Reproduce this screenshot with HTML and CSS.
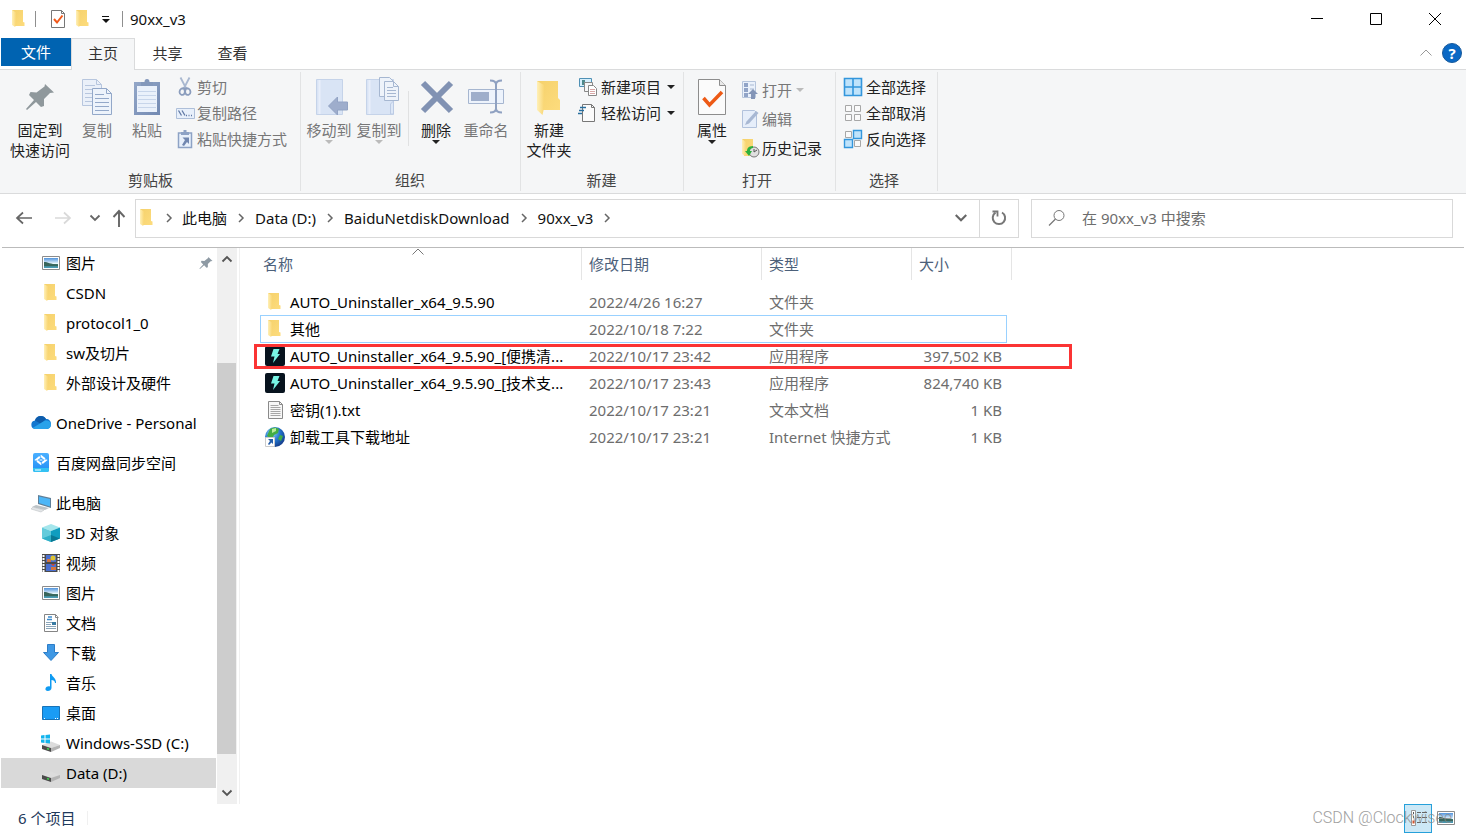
FILE: index.html
```html
<!DOCTYPE html>
<html lang="zh-CN">
<head>
<meta charset="utf-8">
<title>90xx_v3</title>
<link rel="stylesheet" href="styles.css">
</head>
<body>
<svg class="defs" aria-hidden="true">
  <defs>
    <linearGradient id="gFold" x1="0" x2="1"><stop offset="0" stop-color="#fff0b8"/><stop offset="1" stop-color="#f9d673"/></linearGradient>
    <linearGradient id="gBack" x1="0" x2="1" y2="1"><stop offset="0" stop-color="#f5d16c"/><stop offset="1" stop-color="#fddc7d"/></linearGradient>
    <linearGradient id="gSky" x2="0" y2="1"><stop offset="0" stop-color="#4f93dc"/><stop offset=".55" stop-color="#e8f5fc"/><stop offset=".6" stop-color="#3c6f62"/><stop offset="1" stop-color="#4ba0c0"/></linearGradient>
    <linearGradient id="gClip" x2="1" y2="1"><stop offset="0" stop-color="#93a7c8"/><stop offset="1" stop-color="#7289b2"/></linearGradient>
    <radialGradient id="gGlobe" cx=".35" cy=".3" r=".8"><stop offset="0" stop-color="#8fd8f5"/><stop offset=".5" stop-color="#2475cd"/><stop offset="1" stop-color="#12327e"/></radialGradient>
    <linearGradient id="gBaidu" x2="0" y2="1"><stop offset="0" stop-color="#4bb0ff"/><stop offset="1" stop-color="#1f8df5"/></linearGradient>
  </defs>
  <symbol id="folder" viewBox="0 0 20 20"><path d="M3 1h11v12l1.500.5V17H5z" fill="url(#gBack)"/><path d="M3 1l4 2.500V14l-.8 4L3 16z" fill="url(#gFold)"/></symbol>
  <symbol id="bigfolder" viewBox="0 0 40 40"><path d="M8 4h21v17l2 2v10H10z" fill="url(#gBack)"/><path d="M8 4l7 4v23l-1.500 7L8 33z" fill="url(#gFold)"/></symbol>
  <symbol id="check" viewBox="0 0 20 20"><path d="M3.500 1.500h10l3 3v14h-13z" fill="#fff" stroke="#777"/><path d="M13.500 1.500v3h3" fill="none" stroke="#777"/><path d="M6 10l3 3.500 5.500-7" fill="none" stroke="#f1591b" stroke-width="2"/></symbol>
  <symbol id="props" viewBox="0 0 40 40"><path d="M6.500 2.500h21l6 6v29h-27z" fill="#fbfbfb" stroke="#8d8d8d"/><path d="M27.500 2.500v6h6" fill="#e9e9e9" stroke="#8d8d8d"/><path d="M11.500 21l6 7L30 15" fill="none" stroke="#ed5a16" stroke-width="3.500"/></symbol>
  <symbol id="bigpin" viewBox="0 0 40 40"><path d="M25 7l9 8.500-4 .5-6 6v7l-3 1-5-5-9 8-1-1 8-9-5-5 1.500-3 6 .5 8-6z" fill="#8f989c"/></symbol>
  <symbol id="pin" viewBox="5 5 30 30"><path d="M25 7l9 8.500-4 .5-6 6v7l-3 1-5-5-9 8-1-1 8-9-5-5 1.500-3 6 .5 8-6z" fill="#8e9aa4"/></symbol>
  <symbol id="copy" viewBox="0 0 40 40"><g fill="#eaf0f9" stroke="#b7c6de"><path d="M5.500 2.500h14l5 5v21h-19z"/><path d="M19.500 2.500v5h5M8 8.500h10M8 12.500h14M8 16.500h8M8 20.500h8M8 24.500h8" fill="none"/></g><g fill="#edf3fb" stroke="#93a8c9"><path d="M15.500 11.500h14l5 5v21h-19z"/><path d="M29.500 11.500v5h5M18 17.500h9M18 21.500h14M18 25.500h14M18 29.500h14M18 33.500h14" fill="none"/></g></symbol>
  <symbol id="paste" viewBox="0 0 40 40"><path d="M7 5h26v33H7z" fill="url(#gClip)"/><path d="M10 9h20v26H10z" fill="#eaf1fb"/><path d="M14 5h3.500a2.500 3 0 015 0H26v4H14z" fill="#8398bb"/><path d="M11 14.500h18M11 18.500h18M11 22.500h18M11 26.500h18M11 30.500h18" stroke="#c7d5ea"/></symbol>
  <symbol id="cut" viewBox="0 0 20 20"><path d="M4.500.5L11 13M13.500.5L7 13" stroke="#a9b8d0" stroke-width="1.800"/><path d="M8.500 11.500c-2-1-5 .500-5 3.500s3.500 4 5 1.500c.6-1 .5-3 0-5zM9.500 11.500c2-1 5 .500 5 3.500s-3.500 4-5 1.500c-.6-1-.5-3 0-5z" fill="none" stroke="#8b9dbd" stroke-width="1.800"/></symbol>
  <symbol id="path" viewBox="0 0 20 20"><path d="M.5 5.500h18v10H.5z" fill="#e8f0fb" stroke="#aebfd9"/><path d="M2.500 7.500l3 5M6 7.500l3 5M10 12.500h1M12.500 12.500h1M15 12.500h1" stroke="#6079a5" stroke-width="1.300"/></symbol>
  <symbol id="shortcut" viewBox="0 0 20 20"><path d="M2.500 4h13v14.500h-13z" fill="#e8f0fb" stroke="#8da2c5" stroke-width="1.500"/><path d="M5 3h8v3H5zM7.500 1h3v2h-3z" fill="#8da2c5"/><path d="M6.500 8.500H13V15l-2-2-3 4-2-1 3-5z" fill="#7187b0"/></symbol>
  <symbol id="moveto" viewBox="0 0 40 40"><path d="M7.500 2.500h26v35h-26z" fill="#d9e4f5" stroke="#c5d3e9"/><path d="M10.500 3v34" stroke="#e8effa" stroke-width="2"/><path d="M19.500 29l9-9v5h10v8h-10v5z" fill="#9eadcc" stroke="#92a3c4"/></symbol>
  <symbol id="copyto" viewBox="0 0 40 40"><path d="M7.500 2.500h27v35h-27z" fill="#d9e4f5" stroke="#c5d3e9"/><path d="M10.500 3v34" stroke="#e8effa" stroke-width="2"/><path d="M31.500 37V27l3-3v13z" fill="#dce7f7" stroke="#bccbe4"/><g fill="#eef3fa" stroke="#a6b7d1"><path d="M20.500.5h10l4 4v15h-14z"/><path d="M25.500 4.500h9l5 5v14h-14z"/><path d="M34.500 4.500v5h5M28 10.500h6M28 13.500h9M28 16.500h9M28 19.500h9" fill="none"/></g></symbol>
  <symbol id="delete" viewBox="0 0 40 40"><path d="M7 6l28 28M35 6L7 34" stroke="#8192b3" stroke-width="6"/></symbol>
  <symbol id="rename" viewBox="0 0 40 40"><path d="M2.500 12.500h35v14h-35z" fill="#edf3fc" stroke="#a6b6d0"/><path d="M5 15h18v9H5z" fill="#9eaecb"/><path d="M24 3.500c4 0 6 1 6 4v24c0 3-2 4-6 4M36 3.500c-4 0-6 1-6 4v24c0 3 2 4 6 4" fill="none" stroke="#8fa1c1" stroke-width="2"/></symbol>
  <symbol id="newitem" viewBox="0 0 20 20"><path d="M1.500 1.500h12v8h-12z" fill="#d6effc" stroke="#4f90b5"/><path d="M4 3h3v5H4z" fill="#4f8a8c"/><path d="M6.500 5.500h8v9h-8z" fill="#f7f7f7" stroke="#888"/><path d="M10.500 8.500h5l3 3v7h-8z" fill="#fff" stroke="#888"/><path d="M12 12.500h5M12 14.500h5M12 16.500h5" stroke="#d8a7a7"/></symbol>
  <symbol id="easy" viewBox="0 0 20 20"><path d="M4.500 1.500h9l3 3v14h-12z" fill="#fbfbfb" stroke="#777"/><path d="M13.500 1.500v3h3" fill="none" stroke="#777"/><path d="M2 4.500h6M1 7.500h5M0 10.500h4" stroke="#286f9f" stroke-width="1.500"/></symbol>
  <symbol id="open" viewBox="0 0 20 20"><path d="M1.500 1.500h13v16h-13z" fill="#eaf1fb" stroke="#b6c5dc"/><path d="M3 3h4v4H3zM3 8h4v4H3zM3 13h4v4H3z" fill="#91a4c7"/><path d="M9 5h4M9 9h4" stroke="#a9b9d2"/><path d="M12 9l5 5h-3v5h-4v-5H7z" fill="#8395b7"/></symbol>
  <symbol id="edit" viewBox="0 0 20 20"><path d="M1.500 1.500h12l2 2v15h-14z" fill="#e6eefa" stroke="#b2c2dc"/><path d="M4 16l1.500-3.500L15 2l2.500 2L8 14.500z" fill="#a8b8d3"/></symbol>
  <symbol id="history" viewBox="0 0 20 20"><path d="M1 1h11v17H3z" fill="url(#gBack)"/><path d="M1 1l4 3v14l-4-2z" fill="url(#gFold)"/><circle cx="13" cy="14" r="5" fill="#e0e0e0" stroke="#777"/><path d="M13 11v3l3-2" fill="none" stroke="#555"/><path d="M12 8c-5 0-6 3-6 5H4l4 5 3-5H9c0-2 1-3 3-3z" fill="#2db13d"/></symbol>
  <symbol id="selall" viewBox="0 0 20 20"><path d="M1.500 1.500h17v17h-17zM10 1v18M1 10h18" fill="#bfe3fb" stroke="#3396dc" stroke-width="1.600"/></symbol>
  <symbol id="selnone" viewBox="0 0 20 20"><path d="M2.500 2.500h6v6h-6zM11.500 2.500h6v6h-6zM2.500 11.500h6v6h-6zM11.500 11.500h6v6h-6z" fill="#fafafa" stroke="#a7a7a7"/></symbol>
  <symbol id="selinv" viewBox="0 0 20 20"><path d="M2.500 2.500h6v6h-6zM11.500 11.500h6v6h-6z" fill="#fafafa" stroke="#a7a7a7"/><path d="M10.500 1.500h8v8h-8zM1.500 10.500h8v8h-8z" fill="#bfe3fb" stroke="#3396dc" stroke-width="1.400"/></symbol>
  <symbol id="picture" viewBox="0 0 20 20"><path d="M1.500 3.500h17v13h-17z" fill="#fff" stroke="#8b8b8b"/><path d="M3 5h14v10H3z" fill="url(#gSky)"/><path d="M3 9c4 0 6 2 14 3v1H3z" fill="#39665b"/></symbol>
  <symbol id="onedrive" viewBox="0 0 20 20"><path d="M4 7.500A6 6 0 0115 6c3 0 5 2 5 5s-2 5-5 5H4a4.300 4.300 0 010-8.500z" fill="#1277cf"/><path d="M4 7.500A6 6 0 0115 6l-5 5z" fill="#0e5cab"/><path d="M1.500 15L14 7.500c3-.5 6 1 6 4S18 16 15 16H4z" fill="#2aa2ea"/></symbol>
  <symbol id="baidu" viewBox="0 0 20 20"><rect x="2" width="16" height="19" rx="2" fill="url(#gBaidu)"/><path d="M2 15h16v2a2 2 0 01-2 2H4a2 2 0 01-2-2z" fill="#33c2f3"/><path d="M10 3l5 4-5 4-5-4z" fill="none" stroke="#fff" stroke-width="2" stroke-dasharray="5 1.400"/><path d="M8.500 7h3M4 17h6" stroke="#fff"/></symbol>
  <symbol id="pc" viewBox="0 0 20 20"><path d="M7 2l13 3v10L7 11z" fill="#5f7f98"/><path d="M8 3.500L19 6v7.500L8 10z" fill="#4cb6f7"/><path d="M5 12l13 3-4 2-13-3z" fill="#bcc3c7"/><path d="M2 14l11 3-3 2-10-3z" fill="#e2e5e7" stroke="#b6bbbe" stroke-width=".5"/></symbol>
  <symbol id="cube" viewBox="0 0 20 20"><path d="M10 1l9 3.500-9 3.500-9-3.500z" fill="#a5e6ec"/><path d="M1 4.500L10 8v11l-9-3.500z" fill="#62cbdb"/><path d="M10 8l9-3.500v11L10 19z" fill="#109dbf"/><path d="M1 15.500L10 12v7z" fill="#2fb0c8"/><path d="M10 12l9 3.500L10 19z" fill="#0a7894"/></symbol>
  <symbol id="video" viewBox="0 0 20 20"><path d="M1 1h18v18H1z" fill="#4b4b4b"/><path d="M5 2h10v7H5zM5 11h10v7H5z" fill="#4a6fd0"/><path d="M2.500 2v17M17.500 2v17" stroke="#fff" stroke-width="2" stroke-dasharray="2 1"/><path d="M6 6h4v3H6zM10 14h5v3h-5z" fill="#d3743e"/><circle cx="12" cy="5" r="2.500" fill="#ddc231"/><path d="M10 11h4l-2 2z" fill="#d4462b"/></symbol>
  <symbol id="doc" viewBox="0 0 20 20"><path d="M3.500 1.500h11l2 2v15h-13z" fill="#fff" stroke="#858585"/><path d="M14.500 1.500v3h3" fill="none" stroke="#858585"/><path d="M5 9.500h6M5 13.500h10M5 15.500h10M5 11.500h5" stroke="#8aa5b9"/><path d="M7 4h4M6 6.500h5" stroke="#3c8ccd" stroke-width="1.300"/><path d="M11 9h4v3h-4z" fill="#397ba3"/></symbol>
  <symbol id="down" viewBox="0 0 20 20"><path d="M6.500 1.500h7v8h4L10 17.500 2.500 9.500h4z" fill="#3f98e4" stroke="#2c7dc8"/></symbol>
  <symbol id="music" viewBox="0 0 20 20"><path d="M9 1h1.500c.5 3 5 4 4.500 9h-1c0-2-1.500-3-3.500-3v8c0 2-2 3-3.700 3-1.600 0-2.800-1-2.300-2.500.5-1.800 2.500-2.500 4.500-2z" fill="#0f9bf2"/></symbol>
  <symbol id="desktop" viewBox="0 0 20 20"><path d="M1.500 3.500h17v13h-17z" fill="#1a9cf5" stroke="#1873b8"/><path d="M3 15.500h1M14 15.500h1M16 15.500h1" stroke="#fff"/></symbol>
  <symbol id="drive" viewBox="0 0 20 20"><path d="M1 12l9-3.500 9 3.500-9 3z" fill="#dcdcdc"/><path d="M1 12l9 3v4l-9-3z" fill="#4b4b4b"/><path d="M10 15l9-3v3l-9 4z" fill="#b4b4b4"/><path d="M6 15.500l2 .7" stroke="#3fd24c" stroke-width="1.500"/></symbol>
  <symbol id="windrive" viewBox="0 0 20 20"><use href="#drive"/><path d="M0 2.500L3.500 2v3.500H0zM4.500 2L9 1.500v4H4.500zM0 6.500h3.500V10L0 9.500zM4.500 6.500H9v4L4.500 10z" fill="#13b4ed"/></symbol>
  <symbol id="bolt" viewBox="0 0 20 20"><rect width="20" height="20" rx="2" fill="#07131e"/><path d="M8.500 3h6l-2 5H15L8 17l1.500-6.500H6z" fill="#78f6e6"/></symbol>
  <symbol id="txt" viewBox="0 0 20 20"><path d="M3.500 1.500h11l3 3v14h-14z" fill="#f7f7f7" stroke="#8a8a8a"/><path d="M14.500 1.500v3h3" fill="none" stroke="#8a8a8a"/><path d="M5.500 5.500h8M5.500 7.500h10M5.500 9.500h10M5.500 11.500h10M5.500 13.500h10M5.500 15.500h10" stroke="#a6a6a6"/></symbol>
  <symbol id="globe" viewBox="0 0 20 20"><circle cx="10" cy="10" r="10" fill="url(#gGlobe)"/><path d="M5 2c3-2 6-2 9 0l-1 4-4 2-2 4-5-3zM15 8l3 1-2 5-3-2z" fill="#43ad43"/><path d="M7 2l4-1v3L7 6z" fill="#b9ec9c"/><path d="M.5 10.500h9v9h-9z" fill="#fff" stroke="#ccc"/><path d="M3 12h5v5l-1.500-1.500L4 18l-1-1 2-3z" fill="#245eab"/></symbol>
  <symbol id="back" viewBox="0 0 20 20"><path d="M17 10H2M8 4.500L2 10l6 5.500" fill="none" stroke="currentColor" stroke-width="1.700"/></symbol>
  <symbol id="fwd" viewBox="0 0 20 20"><path d="M2 10h15M11 4.500l6 5.500-6 5.500" fill="none" stroke="currentColor" stroke-width="1.700"/></symbol>
  <symbol id="up" viewBox="0 0 20 20"><path d="M9 19V3M3.500 9L9 3l5.500 6" fill="none" stroke="currentColor" stroke-width="1.900"/></symbol>
  <symbol id="chevd" viewBox="0 0 12 12"><path d="M1.500 3.500L6 8l4.500-4.500" fill="none" stroke="currentColor" stroke-width="1.800"/></symbol>
  <symbol id="chevu" viewBox="0 0 12 12"><path d="M1.500 8.500L6 4l4.500 4.500" fill="none" stroke="currentColor" stroke-width="1.800"/></symbol>
  <symbol id="chevr" viewBox="0 0 12 12"><path d="M4 2l4 4-4 4" fill="none" stroke="currentColor" stroke-width="1.500"/></symbol>
  <symbol id="thinup" viewBox="0 0 14 10"><path d="M1.500 7.500L7 2l5.500 5.500" fill="none" stroke="currentColor"/></symbol>
  <symbol id="refresh" viewBox="0 0 20 20"><path d="M13 4.500a6.200 6.200 0 11-6.500.2" fill="none" stroke="currentColor" stroke-width="2"/><path d="M3.500 3.500h5v5" fill="none" stroke="currentColor" stroke-width="1.800"/></symbol>
  <symbol id="search" viewBox="0 0 20 20"><circle cx="12" cy="7.500" r="5" fill="none" stroke="currentColor"/><path d="M8.500 11L2 17.500" stroke="currentColor" stroke-width="1.300"/></symbol>
  <symbol id="details" viewBox="0 0 20 20"><path d="M3.500 2.500h4v15h-4z" fill="#fff" stroke="#999"/><path d="M5 5h1M5 9h1" stroke="#555" stroke-width="2"/><path d="M4.500 14h2" stroke="#d1562a" stroke-width="3"/><path d="M9 4.500h4M14 4.500h5M9 9.500h4M14 9.500h5M9 14.500h4M14 14.500h5" stroke="#666"/></symbol>
</svg>

<header class="titlebar">
  <svg class="i20"><use href="#folder"/></svg>
  <span class="rule"></span>
  <button class="quick" aria-label="属性"><svg class="i20"><use href="#check"/></svg></button>
  <button class="quick" aria-label="新建文件夹"><svg class="i20"><use href="#folder"/></svg></button>
  <button class="custom" aria-label="自定义快速访问工具栏"><span></span></button>
  <span class="rule"></span>
  <h1>90xx_v3</h1>
  <div class="winbtns">
    <button aria-label="最小化"><svg viewBox="0 0 12 12"><path d="M0 5.500h12"/></svg></button>
    <button aria-label="最大化"><svg viewBox="0 0 12 12"><path d="M.5.500h11v11H.5z"/></svg></button>
    <button aria-label="关闭"><svg viewBox="0 0 12 12"><path d="M0 0l12 12M12 0L0 12"/></svg></button>
  </div>
</header>

<nav class="tabs">
  <button class="tab file">文件</button>
  <button class="tab active">主页</button>
  <button class="tab">共享</button>
  <button class="tab">查看</button>
  <div class="tabend">
    <button class="collapse" aria-label="折叠功能区"><svg><use href="#thinup"/></svg></button>
    <button class="help" aria-label="帮助">?</button>
  </div>
</nav>

<section class="ribbon">
  <div class="group clip">
    <div class="tools">
      <button class="big wide"><svg><use href="#bigpin"/></svg><span>固定到<br>快速访问</span></button>
      <button class="big off first"><svg><use href="#copy"/></svg><span>复制</span></button>
      <button class="big off"><svg><use href="#paste"/></svg><span>粘贴</span></button>
      <div class="stack">
        <button class="small off"><svg class="i20"><use href="#cut"/></svg>剪切</button>
        <button class="small off"><svg class="i20"><use href="#path"/></svg>复制路径</button>
        <button class="small off"><svg class="i20"><use href="#shortcut"/></svg>粘贴快捷方式</button>
      </div>
    </div>
    <h2>剪贴板</h2>
  </div>
  <div class="group organize">
    <div class="tools">
      <button class="big off"><svg><use href="#moveto"/></svg><span>移动到</span><i class="caret"></i></button>
      <button class="big off"><svg><use href="#copyto"/></svg><span>复制到</span><i class="caret"></i></button>
      <span class="split"></span>
      <button class="big"><svg><use href="#delete"/></svg><span>删除</span><i class="caret"></i></button>
      <button class="big off"><svg><use href="#rename"/></svg><span>重命名</span></button>
    </div>
    <h2>组织</h2>
  </div>
  <div class="group create">
    <div class="tools">
      <button class="big"><svg><use href="#bigfolder"/></svg><span>新建<br>文件夹</span></button>
      <div class="stack">
        <button class="small"><svg class="i20"><use href="#newitem"/></svg>新建项目<i class="caret"></i></button>
        <button class="small"><svg class="i20"><use href="#easy"/></svg>轻松访问<i class="caret"></i></button>
      </div>
    </div>
    <h2>新建</h2>
  </div>
  <div class="group opening">
    <div class="tools">
      <button class="big"><svg><use href="#props"/></svg><span>属性</span><i class="caret"></i></button>
      <div class="stack loose">
        <button class="small off"><svg class="i20"><use href="#open"/></svg>打开<i class="caret"></i></button>
        <button class="small off"><svg class="i20"><use href="#edit"/></svg>编辑</button>
        <button class="small"><svg class="i20"><use href="#history"/></svg>历史记录</button>
      </div>
    </div>
    <h2>打开</h2>
  </div>
  <div class="group selecting">
    <div class="tools">
      <div class="stack">
        <button class="small"><svg class="i20"><use href="#selall"/></svg>全部选择</button>
        <button class="small"><svg class="i20"><use href="#selnone"/></svg>全部取消</button>
        <button class="small"><svg class="i20"><use href="#selinv"/></svg>反向选择</button>
      </div>
    </div>
    <h2>选择</h2>
  </div>
</section>

<section class="address">
  <div class="navbtns">
    <button aria-label="后退"><svg class="i20"><use href="#back"/></svg></button>
    <button class="faint" aria-label="前进"><svg class="i20"><use href="#fwd"/></svg></button>
    <button class="narrow" aria-label="最近浏览的位置"><svg class="i12"><use href="#chevd"/></svg></button>
    <button class="narrow" aria-label="上移"><svg class="i20"><use href="#up"/></svg></button>
  </div>
  <div class="crumbs">
    <svg class="i20"><use href="#folder"/></svg>
    <svg class="i12"><use href="#chevr"/></svg><a href="#">此电脑</a>
    <svg class="i12"><use href="#chevr"/></svg><a href="#">Data (D:)</a>
    <svg class="i12"><use href="#chevr"/></svg><a href="#">BaiduNetdiskDownload</a>
    <svg class="i12"><use href="#chevr"/></svg><a href="#">90xx_v3</a>
    <svg class="i12"><use href="#chevr"/></svg>
    <button class="recent" aria-label="以前的位置"><svg class="i14"><use href="#chevd"/></svg></button>
    <button class="reload" aria-label="刷新"><svg class="i20"><use href="#refresh"/></svg></button>
  </div>
  <label class="search"><svg class="i20"><use href="#search"/></svg><input type="text" aria-label="搜索" placeholder="在 90xx_v3 中搜索"></label>
</section>

<main class="main">
  <nav class="tree">
    <ul>
      <li><a href="#"><svg class="i20"><use href="#picture"/></svg>图片<svg class="pinned"><use href="#pin"/></svg></a></li>
      <li><a href="#"><svg class="i20"><use href="#folder"/></svg>CSDN</a></li>
      <li><a href="#"><svg class="i20"><use href="#folder"/></svg>protocol1_0</a></li>
      <li><a href="#"><svg class="i20"><use href="#folder"/></svg>sw及切片</a></li>
      <li><a href="#"><svg class="i20"><use href="#folder"/></svg>外部设计及硬件</a></li>
      <li class="root"><a href="#"><svg class="i20"><use href="#onedrive"/></svg>OneDrive - Personal</a></li>
      <li class="root"><a href="#"><svg class="i20"><use href="#baidu"/></svg>百度网盘同步空间</a></li>
      <li class="root"><a href="#"><svg class="i20"><use href="#pc"/></svg>此电脑</a></li>
      <li><a href="#"><svg class="i20"><use href="#cube"/></svg>3D 对象</a></li>
      <li><a href="#"><svg class="i20"><use href="#video"/></svg>视频</a></li>
      <li><a href="#"><svg class="i20"><use href="#picture"/></svg>图片</a></li>
      <li><a href="#"><svg class="i20"><use href="#doc"/></svg>文档</a></li>
      <li><a href="#"><svg class="i20"><use href="#down"/></svg>下载</a></li>
      <li><a href="#"><svg class="i20"><use href="#music"/></svg>音乐</a></li>
      <li><a href="#"><svg class="i20"><use href="#desktop"/></svg>桌面</a></li>
      <li><a href="#"><svg class="i20"><use href="#windrive"/></svg>Windows-SSD (C:)</a></li>
      <li class="current"><a href="#"><svg class="i20"><use href="#drive"/></svg>Data (D:)</a></li>
    </ul>
  </nav>
  <div class="scroll">
    <button aria-label="向上滚动"><svg class="i12"><use href="#chevu"/></svg></button>
    <div class="track"><div class="thumb"></div></div>
    <button aria-label="向下滚动"><svg class="i12"><use href="#chevd"/></svg></button>
  </div>
  <div class="files">
    <table>
      <thead>
        <tr><th class="name">名称<svg class="sort"><use href="#thinup"/></svg></th><th class="date">修改日期</th><th class="type">类型</th><th class="size">大小</th></tr>
      </thead>
      <tbody>
        <tr><td><div><svg class="i20"><use href="#folder"/></svg>AUTO_Uninstaller_x64_9.5.90</div></td><td>2022/4/26 16:27</td><td>文件夹</td><td></td></tr>
        <tr class="focused"><td><div><svg class="i20"><use href="#folder"/></svg>其他</div></td><td>2022/10/18 7:22</td><td>文件夹</td><td></td></tr>
        <tr class="marked"><td><div><svg class="i20"><use href="#bolt"/></svg>AUTO_Uninstaller_x64_9.5.90_[便携清...</div></td><td>2022/10/17 23:42</td><td>应用程序</td><td>397,502 KB</td></tr>
        <tr><td><div><svg class="i20"><use href="#bolt"/></svg>AUTO_Uninstaller_x64_9.5.90_[技术支...</div></td><td>2022/10/17 23:43</td><td>应用程序</td><td>824,740 KB</td></tr>
        <tr><td><div><svg class="i20"><use href="#txt"/></svg>密钥(1).txt</div></td><td>2022/10/17 23:21</td><td>文本文档</td><td>1 KB</td></tr>
        <tr><td><div><svg class="i20"><use href="#globe"/></svg>卸载工具下载地址</div></td><td>2022/10/17 23:21</td><td>Internet 快捷方式</td><td>1 KB</td></tr>
      </tbody>
    </table>
  </div>
</main>

<footer class="status">
  <span class="count">6 个项目</span>
  <div class="views">
    <button class="on" aria-label="详细信息"><svg class="i20"><use href="#details"/></svg></button>
    <button aria-label="大图标"><svg class="i20"><use href="#picture"/></svg></button>
  </div>
  <span class="watermark">CSDN @Clockwisee</span>
</footer>
</body>
</html>
```
FILE: styles.css
```css
* { box-sizing: border-box; }
body {
  margin: 0;
  min-height: 100vh;
  display: flex;
  flex-direction: column;
  background: #fff;
  color: #111;
  font: 15px/20px "Noto Sans", "Noto Sans CJK SC", sans-serif;
}
button, input { font: inherit; color: inherit; border: 0; background: none; padding: 0; }
button { display: flex; align-items: center; justify-content: center; white-space: nowrap; }
h1, h2 { margin: 0; font-size: 15px; font-weight: 400; }
a { color: inherit; text-decoration: none; }
svg { display: block; flex: none; }
ul { list-style: none; margin: 0; padding: 0; }
.defs { position: absolute; width: 0; height: 0; }
.i20 { width: 20px; height: 20px; }
.i14 { width: 14px; height: 14px; }
.i12 { width: 12px; height: 12px; }

.titlebar { height: 38px; display: flex; align-items: center; padding-left: 9px; }
.rule { width: 1px; height: 16px; background: #8f8f8f; margin: 0 12px 0 6px; }
.quick { width: 25px; height: 24px; justify-content: flex-start; }
.custom { width: 14px; height: 20px; margin-right: 4px; }
.custom span { width: 7px; height: 7px; border-top: 1px solid #111; display: flex; align-items: flex-end; }
.custom span::after { content: ""; border: solid transparent; border-width: 4px 4px 0; border-top-color: #111; }
.titlebar h1 { margin-left: -5px; }
.winbtns { margin-left: auto; display: flex; gap: 1px; padding-right: 2px; }
.winbtns button { width: 58px; height: 38px; }
.winbtns svg { width: 12px; height: 12px; fill: none; stroke: #000; overflow: visible; }

.tabs { height: 32px; display: flex; padding-left: 1px; border-bottom: 1px solid #dadbdc; }
.tab { width: 65px; color: #333; height: 30px; }
.tab.file { width: 70px; height: 28px; background: #0063b1; color: #fff; }
.tab.active { width: 64px; height: 32px; padding-bottom: 3px; background: #f5f6f7; border: 1px solid #dadbdc; border-bottom: 0; }
.tabend { margin-left: auto; display: flex; align-items: center; gap: 9px; padding: 0 4px 2px 0; }
.collapse svg { width: 14px; height: 10px; color: #999; }
.help { width: 20px; height: 20px; border-radius: 50%; background: #0a68c4; border: 1px solid #185a9c; color: #fff; font-weight: 700; }

.ribbon { background: #f5f6f7; border-bottom: 1px solid #dadbdc; display: flex; height: 124px; padding: 2px 0 2px 1px; }
.group { border-right: 1px solid #e2e3e4; display: flex; flex-direction: column; justify-content: space-between; color: #222; padding: 5px 4px 0 3px; }
.group h2 { text-align: center; color: #444; margin-bottom: 1px; }
.clip { width: 300px; padding-left: 4px; }
.organize { width: 220px; }
.create { width: 163px; }
.opening { width: 152px; }
.selecting { width: 102px; }
.group.opening h2, .group.selecting h2 { margin-right: 4px; }
.tools { display: flex; align-items: flex-start; }
.big { width: 50px; flex-direction: column; color: #1e1e1e; }
.big.wide { width: 70px; }
.big.first { margin-left: -3px; }
.big svg { width: 40px; height: 40px; margin-bottom: 3px; }
.off { color: #777; }
.caret { border: solid transparent; border-width: 4px 4px 0; border-top-color: #222; }
.off .caret { border-top-color: #bbb; }
.small .caret { margin-left: 3px; }
.split { width: 1px; height: 55px; background: #e0e1e2; margin: 14px 2px 0 4px; }
.stack { display: flex; flex-direction: column; align-items: flex-start; margin-left: 4px; }
.small { height: 26px; gap: 2px; margin-top: -3px; margin-bottom: 3px; }
.clip .stack .small { gap: 1px; }
.create .small, .selecting .small { gap: 3px; }
.loose .small { margin-top: 0; gap: 1px; }

.address { display: flex; height: 54px; align-items: center; padding: 0 11px 5px 8px; border-bottom: 1px solid #bbb; margin: 0 2px; }
.navbtns { display: flex; align-items: center; color: #666; width: 125px; flex: none; }
.navbtns button { width: 38px; height: 30px; }
.navbtns button:first-child { width: 30px; margin-right: 4px; }
.navbtns .faint { color: #d9d9d9; }
.navbtns .narrow { width: 25px; }
.crumbs { flex: 1; display: flex; align-items: center; height: 39px; border: 1px solid #d9d9d9; color: #111; padding-left: 1px; }
.crumbs > .i12 { color: #666; margin: 0 8px; }
.crumbs > .i20 + .i12 { margin: 0 7px 0 6px; }
.recent { margin-left: auto; width: 37px; height: 37px; color: #666; }
.reload { width: 39px; height: 37px; border-left: 1px solid #d9d9d9; color: #777; }
.search { flex: 0 1 422px; margin-left: 12px; height: 39px; border: 1px solid #d9d9d9; display: flex; align-items: center; padding-left: 15px; color: #777; }
.search input { flex: 1; min-width: 0; margin-left: 15px; outline: 0; }
.search input::placeholder { color: #6d6d6d; opacity: 1; }

.main { flex: 1; display: flex; padding-left: 1px; }
.tree { width: 215px; }
.tree a { height: 30px; display: flex; align-items: center; gap: 5px; padding-left: 40px; color: #000; }
.tree .root { margin: 10px 0; }
.tree .root + .root { margin-top: 0; }
.tree .root:nth-child(8) { margin-bottom: 0; }
.tree .root a { padding-left: 30px; }
.tree .current { background: #d9d9d9; }
.pinned { width: 14px; height: 14px; margin-left: auto; margin-right: 3px; }
.scroll { width: 20px; margin-left: 1px; background: #f0f0f0; display: flex; flex-direction: column; color: #555; }
.scroll button { height: 22px; }
.track { flex: 1; display: flex; flex-direction: column; padding: 93px 1px 28px 0; }
.thumb { flex: 1; background: #cdcdcd; }
.files { flex: 1; margin-left: 2px; padding-left: 20px; border-left: 1px solid #f0f0f0; }
table { border-collapse: separate; border-spacing: 0; table-layout: fixed; width: 752px; }
th { height: 32px; text-align: left; font-weight: 400; color: #4c607a; padding: 0 0 0 7px; border-right: 1px solid #e5e5e5; }
th.name { width: 322px; padding-left: 3px; position: relative; }
th.date { width: 180px; }
th.type { width: 150px; }
th.size { width: 100px; }
.sort { position: absolute; left: 151px; top: -1px; width: 14px; height: 10px; color: #777; }
thead::after { content: ""; display: block; height: 8px; }
tbody tr { position: relative; }
td { height: 27px; padding: 0 0 0 7px; color: #6d6d6d; white-space: nowrap; }
td:first-child { padding-left: 5px; color: #000; }
td:first-child div { display: flex; align-items: center; gap: 5px; }
td:last-child { text-align: right; padding: 0 10px 0 0; }
.focused::after { content: ""; position: absolute; inset: 0 5px -1px 0; border: 1px solid #99d1ff; }
.marked::after { content: ""; position: absolute; inset: 2px -60px 0 -6px; border: 3px solid #fb3434; }

.status { height: 30px; display: flex; align-items: center; padding: 0 6px 2px 18px; position: relative; color: #1e395b; }
.count { padding-right: 12px; border-right: 1px solid #f0f0f0; line-height: 14px; }
.views { margin-left: auto; display: flex; }
.views button { width: 28px; height: 29px; }
.views .on { background: #cce8f6; border: 1px solid #26a0da; }
.watermark { position: absolute; right: 14px; top: 4px; color: #888; opacity: .8; font: 15px/20px Roboto, sans-serif; letter-spacing: normal; font-weight: 300; font-size: 16px; }
```
